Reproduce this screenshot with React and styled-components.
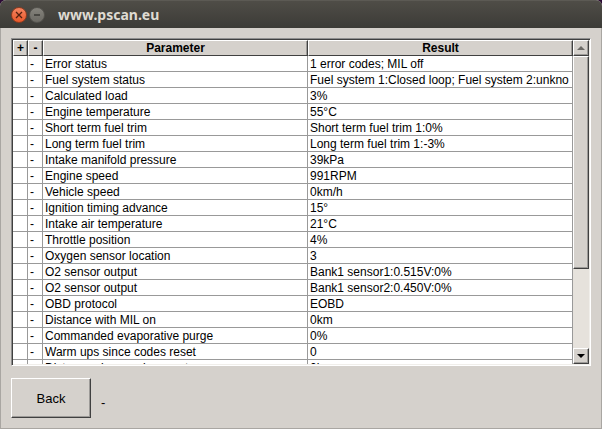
import React, { useRef } from 'react';
import styled, { createGlobalStyle } from 'styled-components';

const parameters = [
  { name: 'Error status', result: '1 error codes; MIL off' },
  { name: 'Fuel system status', result: 'Fuel system 1:Closed loop; Fuel system 2:unkno' },
  { name: 'Calculated load', result: '3%' },
  { name: 'Engine temperature', result: '55°C' },
  { name: 'Short term fuel trim', result: 'Short term fuel trim 1:0%' },
  { name: 'Long term fuel trim', result: 'Long term fuel trim 1:-3%' },
  { name: 'Intake manifold pressure', result: '39kPa' },
  { name: 'Engine speed', result: '991RPM' },
  { name: 'Vehicle speed', result: '0km/h' },
  { name: 'Ignition timing advance', result: '15°' },
  { name: 'Intake air temperature', result: '21°C' },
  { name: 'Throttle position', result: '4%' },
  { name: 'Oxygen sensor location', result: '3' },
  { name: 'O2 sensor output', result: 'Bank1 sensor1:0.515V:0%' },
  { name: 'O2 sensor output', result: 'Bank1 sensor2:0.450V:0%' },
  { name: 'OBD protocol', result: 'EOBD' },
  { name: 'Distance with MIL on', result: '0km' },
  { name: 'Commanded evaporative purge', result: '0%' },
  { name: 'Warm ups since codes reset', result: '0' },
  { name: 'Distance since codes reset', result: '0km' },
];

const ROW_HEIGHT = 16;

const App = () => {
  const listRef = useRef(null);

  const scrollRows = (count) => {
    listRef.current.scrollTop += count * ROW_HEIGHT;
  };

  return (
    <>
      <GlobalStyle />
      <Window>
        <TitleBar>
          <CloseButton type="button" aria-label="Close">
            <svg width="14" height="14" viewBox="0 0 14 14">
              <path d="M4 4l6 6M10 4l-6 6" stroke="#54200f" strokeWidth="1.3" />
            </svg>
          </CloseButton>
          <MinimizeButton type="button" aria-label="Minimize">
            <svg width="14" height="14" viewBox="0 0 14 14">
              <path d="M4 7h6" stroke="#3a3935" strokeWidth="1.3" />
            </svg>
          </MinimizeButton>
          <Title>www.pscan.eu</Title>
        </TitleBar>
        <Content>
          <Frame>
            <List ref={listRef}>
              <Table>
                <colgroup>
                  <col width="15" />
                  <col width="15" />
                  <col />
                  <col />
                </colgroup>
                <thead>
                  <tr>
                    <HeaderCell>+</HeaderCell>
                    <HeaderCell>-</HeaderCell>
                    <HeaderCell>Parameter</HeaderCell>
                    <HeaderCell>Result</HeaderCell>
                  </tr>
                </thead>
                <tbody>
                  {parameters.map((parameter, index) => (
                    <tr key={index}>
                      <Cell />
                      <Cell>-</Cell>
                      <Cell>{parameter.name}</Cell>
                      <Cell>{parameter.result}</Cell>
                    </tr>
                  ))}
                </tbody>
              </Table>
            </List>
            <ScrollBar>
              <ScrollButton type="button" aria-label="Scroll up" onClick={() => scrollRows(-1)}>
                <svg width="8" height="4" viewBox="0 0 8 4">
                  <path d="M4 0L8 4H0z" fill="#6c6a66" />
                </svg>
              </ScrollButton>
              <Track>
                <Thumb />
              </Track>
              <ScrollButton type="button" aria-label="Scroll down" onClick={() => scrollRows(1)}>
                <svg width="8" height="4" viewBox="0 0 8 4">
                  <path d="M0 0h8L4 4z" fill="#000" />
                </svg>
              </ScrollButton>
            </ScrollBar>
          </Frame>
          <Footer>
            <BackButton type="button">Back</BackButton>
            <Status>-</Status>
          </Footer>
        </Content>
      </Window>
    </>
  );
};

export default App;

const GlobalStyle = createGlobalStyle`
  * {
    box-sizing: border-box;
  }
  body {
    margin: 0;
    background-color: #2c0a35;
    font-family: "Liberation Sans", Arial, sans-serif;
    font-size: 12px;
    color: #000;
  }
`;

const Window = styled.main`
  display: flex;
  flex-direction: column;
  height: 100vh;
  border-radius: 6px 6px 0 0;
  overflow: hidden;
  background-color: #d5d1cc;
`;

const TitleBar = styled.header`
  display: flex;
  align-items: center;
  flex: none;
  height: 28px;
  padding: 0 11px;
  gap: 2px;
  border-top: 1px solid #5c5a54;
  background: linear-gradient(#4f4d47, #3c3b37);
`;

const WindowButton = styled.button`
  display: flex;
  align-items: center;
  justify-content: center;
  width: 16px;
  height: 16px;
  padding: 0;
  border: 1px solid;
  border-radius: 50%;
`;

const CloseButton = styled(WindowButton)`
  border-color: #8f3c20;
  background: linear-gradient(#f58460, #e9582a);
`;

const MinimizeButton = styled(WindowButton)`
  border-color: #55534e;
  background: linear-gradient(#85837c, #6b6963);
`;

const Title = styled.h1`
  margin: 0 0 0 11px;
  font-family: "Noto Sans", "Open Sans", sans-serif;
  font-size: 14px;
  line-height: 20px;
  font-weight: bold;
  color: #dfdbd2;
`;

const Content = styled.div`
  display: flex;
  flex-direction: column;
  flex: 1;
  min-height: 0;
  gap: 12px;
  padding: 10px;
  border: 1px solid #a9a6a2;
  border-top: none;
`;

const Frame = styled.section`
  display: flex;
  flex: 1;
  min-height: 0;
  padding: 1px;
  border: 1px solid;
  border-color: #8f8f8f #fff #fff #8f8f8f;
  box-shadow: inset 1px 1px #404040, inset -1px -1px #f0eeea;
`;

const List = styled.div`
  flex: 1;
  min-width: 0;
  overflow: hidden;
  background-color: #fff;
`;

const Table = styled.table`
  width: 100%;
  table-layout: fixed;
  border-collapse: separate;
  border-spacing: 0;
`;

const HeaderCell = styled.th`
  position: sticky;
  top: 0;
  height: 16px;
  padding: 0;
  line-height: 14px;
  font-weight: bold;
  text-align: center;
  background-color: #d5d1cc;
  border: 1px solid;
  border-color: #fff #404040 #404040 #fff;
  box-shadow: inset -1px 0 #9c9a97;
`;

const Cell = styled.td`
  height: 16px;
  padding: 1px 0 0 2px;
  line-height: 14px;
  white-space: nowrap;
  overflow: hidden;
  border-right: 1px solid #999;
  border-bottom: 1px solid #999;
`;

const ScrollBar = styled.div`
  display: flex;
  flex-direction: column;
  flex: none;
  width: 16px;
`;

const raised = `
  background-color: #d5d1cc;
  border: 1px solid;
  border-color: #fff #404040 #404040 #fff;
  box-shadow: inset -1px -1px #9c9a97;
`;

const ScrollButton = styled.button`
  display: flex;
  align-items: center;
  justify-content: center;
  flex: none;
  width: 16px;
  height: 16px;
  padding: 0;
  ${raised}
`;

const Track = styled.div`
  flex: 1;
  background-color: #e6e2dc;
`;

const Thumb = styled.div`
  height: 73%;
  ${raised}
`;

const Footer = styled.footer`
  display: flex;
  align-items: flex-end;
  flex: none;
  gap: 10px;
`;

const BackButton = styled.button`
  width: 80px;
  height: 40px;
  padding: 0;
  font-family: inherit;
  font-size: 13px;
  color: #000;
  ${raised}
`;

const Status = styled.output`
  font-size: 13px;
  line-height: 30px;
`;
